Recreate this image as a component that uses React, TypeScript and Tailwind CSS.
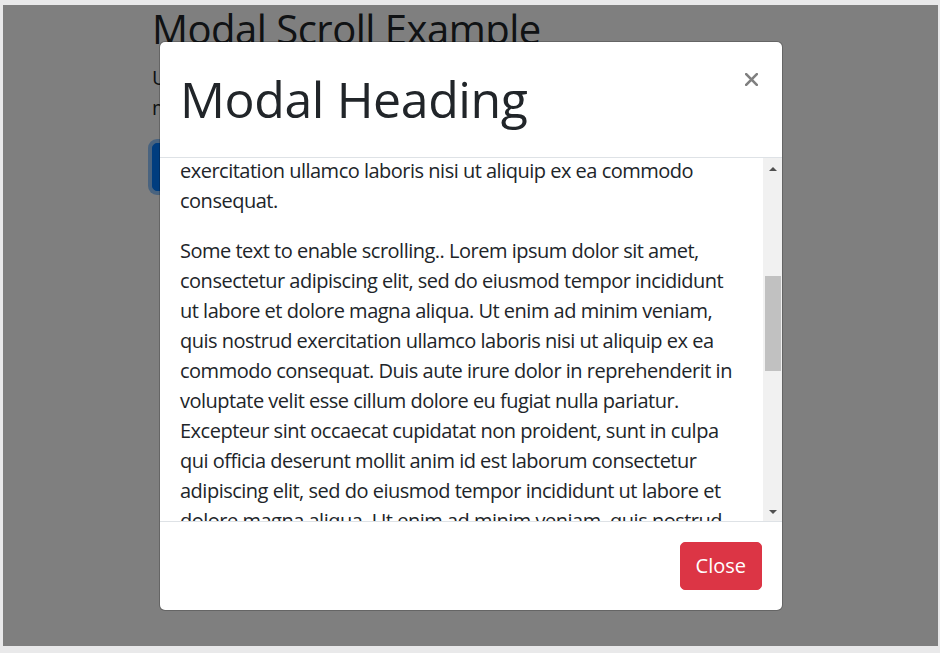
import React from "react";

const font = { fontFamily: '"Open Sans", "Noto Sans", Arial, sans-serif' };

const p1 = [
  "exercitation ullamco laboris nisi ut aliquip ex ea commodo",
  "consequat.",
];
const p2 = [
  "Some text to enable scrolling.. Lorem ipsum dolor sit amet,",
  "consectetur adipiscing elit, sed do eiusmod tempor incididunt",
  "ut labore et dolore magna aliqua. Ut enim ad minim veniam,",
  "quis nostrud exercitation ullamco laboris nisi ut aliquip ex ea",
  "commodo consequat. Duis aute irure dolor in reprehenderit in",
  "voluptate velit esse cillum dolore eu fugiat nulla pariatur.",
  "Excepteur sint occaecat cupidatat non proident, sunt in culpa",
  "qui officia deserunt mollit anim id est laborum consectetur",
  "adipiscing elit, sed do eiusmod tempor incididunt ut labore et",
  "dolore magna aliqua. Ut enim ad minim veniam, quis nostrud",
  "exercitation ullamco laboris nisi ut aliquip ex ea commodo",
  "consequat.",
];

function Lines({ lines }: { lines: string[] }) {
  return (
    <p className="mb-[20px]">
      {lines.map((l, i) => (
        <span key={i} className="block whitespace-nowrap">
          {l}
        </span>
      ))}
    </p>
  );
}

export default function App() {
  return (
    <div
      className="min-h-screen bg-[#e9e9ea] pt-[5px] pl-[3px] pr-[2px] pb-[7px]"
      style={font}
    >
      <div className="relative h-[641px] overflow-hidden bg-white text-[#212529]">
        {/* page under the modal */}
        <div className="mx-auto w-[675px] px-[19px] tracking-[-0.5px]">
          <h2 className="text-[40px] font-medium leading-[48px] mb-[10px]">
            Modal Scroll Example
          </h2>
          <p className="text-[20px] leading-[30px] mb-[20px]">
            Use the .modal-dialog-scrollable class to enable scrolling inside the
            <br />
            modal.
          </p>
          <button className="rounded-[5px] border border-[#007bff] bg-[#007bff] px-[15px] py-[8px] text-[20px] leading-[30px] text-white shadow-[0_0_0_4px_rgba(38,143,255,0.5)]">
            Open modal
          </button>
        </div>

        {/* backdrop */}
        <div className="absolute inset-0 bg-black/50" />

        {/* modal */}
        <div className="absolute inset-0 flex justify-start pl-[156px] pt-[36px]">
          <div className="flex h-[570px] w-[624px] flex-col overflow-hidden rounded-[6px] border border-black/20 bg-white bg-clip-padding">
            <div className="flex items-start justify-between border-b border-[#dee2e6] px-[20px] py-[20px]">
              <h4 className="text-[50px] font-medium leading-[75px] tracking-[-0.4px]">
                Modal Heading
              </h4>
              <svg
                width="13"
                height="13"
                viewBox="0 0 13 13"
                className="mt-[11px] mr-[4px]"
              >
                <path
                  d="M1.2 1.2 L11.8 11.8 M11.8 1.2 L1.2 11.8"
                  stroke="#808080"
                  strokeWidth="2.6"
                  strokeLinecap="square"
                />
              </svg>
            </div>

            <div className="relative flex-1 overflow-hidden">
              <div className="-mt-[2px] pl-[20px] pr-[37px] text-[20px] leading-[30px] tracking-[-0.5px]">
                <Lines lines={p1} />
                <Lines lines={p2} />
              </div>
              {/* scrollbar */}
              <div className="absolute right-0 top-0 bottom-0 w-[19px] bg-[#f1f1f1]">
                <div className="flex h-[17px] items-center justify-center pl-[1px] pt-[4px]">
                  <div className="h-0 w-0 border-x-[4px] border-b-[4px] border-x-transparent border-b-[#505050]" />
                </div>
                <div className="absolute left-[2px] right-[1px] top-[118px] h-[95px] bg-[#c1c1c1]" />
                <div className="absolute bottom-0 left-0 right-0 flex h-[17px] items-center justify-center pl-[1px] pb-[2px]">
                  <div className="h-0 w-0 border-x-[4px] border-t-[4px] border-x-transparent border-t-[#505050]" />
                </div>
              </div>
            </div>

            <div className="flex items-center justify-end border-t border-[#dee2e6] px-[20px] py-[20px]">
              <button className="rounded-[5px] border border-[#dc3545] bg-[#dc3545] px-[15px] py-[8px] text-[20px] leading-[30px] text-white">
                Close
              </button>
            </div>
          </div>
        </div>
      </div>
    </div>
  );
}
